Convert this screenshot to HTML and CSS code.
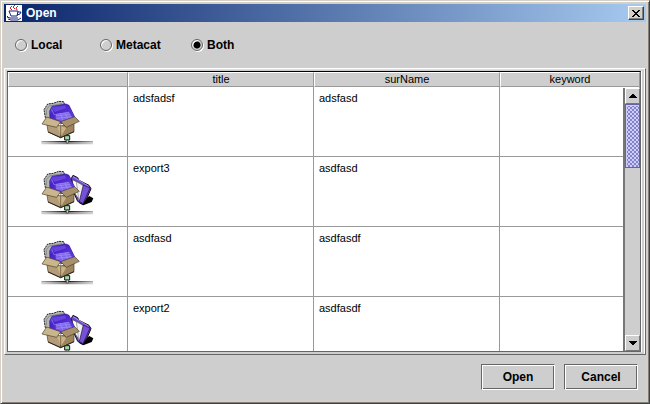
FILE: index.html
```html
<!DOCTYPE html>
<html lang="en">
<head>
<meta charset="utf-8">
<title>Open</title>
<link rel="stylesheet" href="styles.css">
</head>
<body>
<svg class="defs" aria-hidden="true">
  <defs>
    <linearGradient id="shadow"><stop offset="0" stop-color="#aaa"/><stop offset=".5" stop-color="#111"/><stop offset="1" stop-color="#aaa"/></linearGradient>
    <linearGradient id="violet" x2="1" y2="1"><stop offset="0" stop-color="#8068f0"/><stop offset=".3" stop-color="#4a22c8"/><stop offset="1" stop-color="#6a48e8"/></linearGradient>
    <symbol id="box" viewBox="30 24 165 138">
      <path d="M34 150H189V154H34z" fill="url(#shadow)"/>
      <path d="M34 154H189V160H34z" fill="url(#shadow)" opacity=".5"/>
      <path d="M104 134h15v13h-15z" fill="#9fdcae" stroke="#111" stroke-width="3"/>
      <path d="M109 147h6v9h-6z" fill="#ddd" stroke="#333" stroke-width="2"/>
      <path d="M46 80L42 56L53 39L70 37L86 31L101 32L104 43L68 52L61 84z" fill="#b4b8b4" stroke="#222" stroke-width="3" stroke-dasharray="6 2"/>
      <path d="M50 73L49 57L58 45L96 38" fill="none" stroke="#8c908c" stroke-width="3"/>
      <path d="M59 60L66 46L108 39L117 43L134 78L128 88L96 98L60 88z" fill="url(#violet)" stroke="#2a128c" stroke-width="2"/>
      <path d="M68 51L105 43L109 52L74 63z" fill="#6544df"/>
      <path d="M65 55L72 71L117 64M76 75L121 70M79 82L125 77M91 67L98 87M105 65L113 84" stroke="#9484f8" stroke-width="2" fill="none"/>
      <path d="M78 69L117 63L127 82L96 91L77 85z" fill="#b7acff" opacity=".4"/>
      <path d="M50 94L92 105V140L54 122z" fill="#b39d78" stroke="#4a3e2a" stroke-width="2"/>
      <path d="M92 105L132 94V122L92 140z" fill="#9b845e" stroke="#4a3e2a" stroke-width="2"/>
      <path d="M92 105L109 110L93 136L81 108z" fill="#c9b48a"/>
      <path d="M92 100V138" stroke="#5a4a30" stroke-width="2"/>
      <path d="M54 123L92 140L132 122" fill="none" stroke="#2b2418" stroke-width="3"/>
      <path d="M50 78L92 92L80 109L36 99z" fill="#cab68c" stroke="#4a3e2a" stroke-width="2"/>
      <path d="M92 92L134 77L148 91L109 109z" fill="#a8916a" stroke="#4a3e2a" stroke-width="2"/>
    </symbol>
    <symbol id="folder" viewBox="30 24 165 138">
      <path d="M148 127L178 105L190 112L185 123L160 133z" fill="#000"/>
      <path d="M124 52L129 43L143 50L147 58L177 73L183 83L171 111L158 130L143 121L128 88z" fill="#7049d2" stroke="#111" stroke-width="3"/>
      <path d="M128 56L159 73L152 121L145 113L126 84z" fill="#fff" stroke="#333" stroke-width="2"/>
      <path d="M139 62L163 76L153 122L146 115z" fill="#f0eff4" stroke="#777" stroke-width="2"/>
      <path d="M160 72L180 81L159 128L148 121z" fill="#7650d8" stroke="#1b1230" stroke-width="2"/>
      <path d="M129 47L176 76" stroke="#a68bef" stroke-width="3"/>
    </symbol>
  </defs>
</svg>

<main class="window">
  <header class="titlebar">
    <svg class="logo" viewBox="0 0 16 16" aria-hidden="true">
      <path fill="#fff" d="M0 0h16v16H0z"/>
      <path d="M6 1L4 3L6 5M9 0L7 2L9 4M12 1L10 3L11 5" fill="none" stroke="#e01818"/>
      <path d="M3 6H12L11 11H5L3 6M12 7H15L14 9L11 10M2 11L1 12L4 13H12M2 14L5 15H12L15 13" fill="none" stroke="#162080"/>
    </svg>
    <h1 class="title">Open</h1>
    <button class="close" type="button" aria-label="Close">
      <svg viewBox="0 0 8 7" aria-hidden="true"><path d="M0 0h2v1h1v1h2V1h1V0h2v1H7v1H6v1H5v1h1v1h1v1h1v1H6V6H5V5H3v1H2v1H0V6h1V5h1V4h1V3H2V2H1V1H0z"/></svg>
    </button>
  </header>

  <form class="content">
    <div class="sources" role="radiogroup" aria-label="Source">
      <label class="source"><input type="radio" name="source">Local</label>
      <label class="source"><input type="radio" name="source">Metacat</label>
      <label class="source"><input type="radio" name="source" checked>Both</label>
    </div>

    <div class="panel">
      <div class="view">
        <table class="results">
          <colgroup><col class="c-icon"><col class="c-text"><col class="c-text"><col></colgroup>
          <thead>
            <tr><th aria-label="type"></th><th>title</th><th>surName</th><th>keyword</th></tr>
          </thead>
          <tbody>
            <tr><td class="pic"><svg><use href="#box"/></svg></td><td>adsfadsf</td><td>adsfasd</td><td></td></tr>
            <tr><td class="pic"><svg><use href="#folder"/><use href="#box"/></svg></td><td>export3</td><td>asdfasd</td><td></td></tr>
            <tr><td class="pic"><svg><use href="#box"/></svg></td><td>asdfasd</td><td>asdfasdf</td><td></td></tr>
            <tr><td class="pic"><svg><use href="#folder"/><use href="#box"/></svg></td><td>export2</td><td>asdfasdf</td><td></td></tr>
          </tbody>
        </table>
        <div class="scrollbar">
          <button class="arrow" type="button" aria-label="Scroll up"><svg viewBox="0 0 8 4"><path d="M3 0h2v1h1v1h1v1h1v1H0V3h1V2h1V1h1z"/></svg></button>
          <div class="track"><div class="thumb"></div></div>
          <button class="arrow" type="button" aria-label="Scroll down"><svg viewBox="0 0 8 4"><path d="M0 0h8v1H7v1H6v1H5v1H3V3H2V2H1V1H0z"/></svg></button>
        </div>
      </div>
    </div>

    <footer class="actions">
      <button class="action" type="button">Open</button>
      <button class="action" type="button">Cancel</button>
    </footer>
  </form>
</main>
</body>
</html>
```
FILE: styles.css
```css
* { box-sizing: border-box; }

body {
  margin: 0;
  background: #d4d0c8;
  color: #000;
  font: bold 12px/16px "Liberation Sans", Arial, sans-serif;
}

button { font: inherit; color: inherit; padding: 0; border-radius: 0; }

.defs { position: absolute; width: 0; height: 0; }

.window {
  display: flex;
  flex-direction: column;
  height: 100vh;
  padding: 2px;
  background: #d4d0c8;
  border: 1px solid;
  border-color: #d4d0c8 #404040 #404040 #d4d0c8;
  box-shadow: inset 1px 1px #fff, inset -1px -1px #808080;
}

.titlebar {
  display: flex;
  align-items: center;
  gap: 4px;
  height: 18px;
  margin: 1px 1px 0;
  padding: 0 2px;
  color: #fff;
  background: linear-gradient(90deg, #0a246a, #a6caf0);
}

.logo { width: 16px; height: 16px; }
.title { flex: 1; margin: 0; font-size: 12px; }

.close {
  display: grid;
  place-items: center;
  width: 16px;
  height: 14px;
  background: #d4d0c8;
  border: 1px solid;
  border-color: #fff #404040 #404040 #fff;
  box-shadow: inset -1px -1px #808080;
}
.close svg { width: 8px; height: 7px; }

.content {
  flex: 1;
  display: flex;
  flex-direction: column;
  min-height: 0;
  margin: 0 1px 1px;
  background: #cecece;
}

.sources {
  display: grid;
  grid-template-columns: 85px 91px auto;
  padding: 15px 11px;
}
.source { display: flex; align-items: center; gap: 4px; }
.source input {
  appearance: none;
  width: 12px;
  height: 12px;
  margin: 0;
  border: 1px solid #666;
  border-radius: 50%;
  box-shadow: 1px 1px #fff, inset 1px 1px #fff;
}
.source input:checked { background: radial-gradient(circle, #000 0 3px, transparent 4px); }

.panel {
  flex: 1;
  min-height: 0;
  padding: 2px 4px 2px 2px;
  border: 1px solid;
  border-color: #fff #666 #666 #fff;
  box-shadow: inset 1px 1px #ddd, inset -1px 0 #fff;
}

.view {
  position: relative;
  height: 100%;
  overflow: hidden;
  background: #fff;
  border: 1px solid;
  border-color: #000 #666 #666;
  box-shadow: 1px 0 #fff;
}

.results {
  width: 100%;
  table-layout: fixed;
  border-collapse: separate;
  border-spacing: 0;
  font-size: 11px;
  font-weight: normal;
  line-height: 13px;
}
.c-icon { width: 120px; }
.c-text { width: 186px; }

th {
  height: 15px;
  padding: 0;
  font-weight: normal;
  background: #cecece;
  border: 1px solid;
  border-color: #fff #999 #999 #fff;
}

td {
  height: 70px;
  padding: 5px;
  vertical-align: top;
  border: solid #999;
  border-width: 0 1px 1px 0;
}
.pic { padding: 12px 0 0; text-align: center; }
.pic svg { width: 55px; height: 46px; }

.scrollbar {
  position: absolute;
  inset: 16px 0 0 auto;
  display: flex;
  flex-direction: column;
  width: 17px;
  background: #cecece;
  border-left: 2px solid #777;
}
.arrow {
  display: grid;
  place-items: center;
  height: 16px;
  background: #cecece;
  border: 1px solid;
  border-color: #fff #777 #777 #fff;
}
.arrow svg { width: 8px; height: 4px; }
.track { flex: 1; }
.thumb {
  height: 64px;
  border: 1px solid #6464a0;
  box-shadow: inset 1px 1px #ccccff;
  background-color: #8484c4;
  background-image:
    radial-gradient(circle at 1px 1px, #ccccff 1px, transparent 1px),
    radial-gradient(circle at 3px 3px, #ccccff 1px, transparent 1px);
  background-size: 4px 4px;
}

.actions {
  display: flex;
  justify-content: flex-end;
  gap: 9px;
  padding: 9px 8px 10px;
}
.action {
  width: 74px;
  height: 26px;
  background: #cecece;
  border: 1px solid;
  border-color: #666 #fff #fff #666;
  box-shadow: inset 1px 1px #fff, inset -1px -1px #666;
}
```
